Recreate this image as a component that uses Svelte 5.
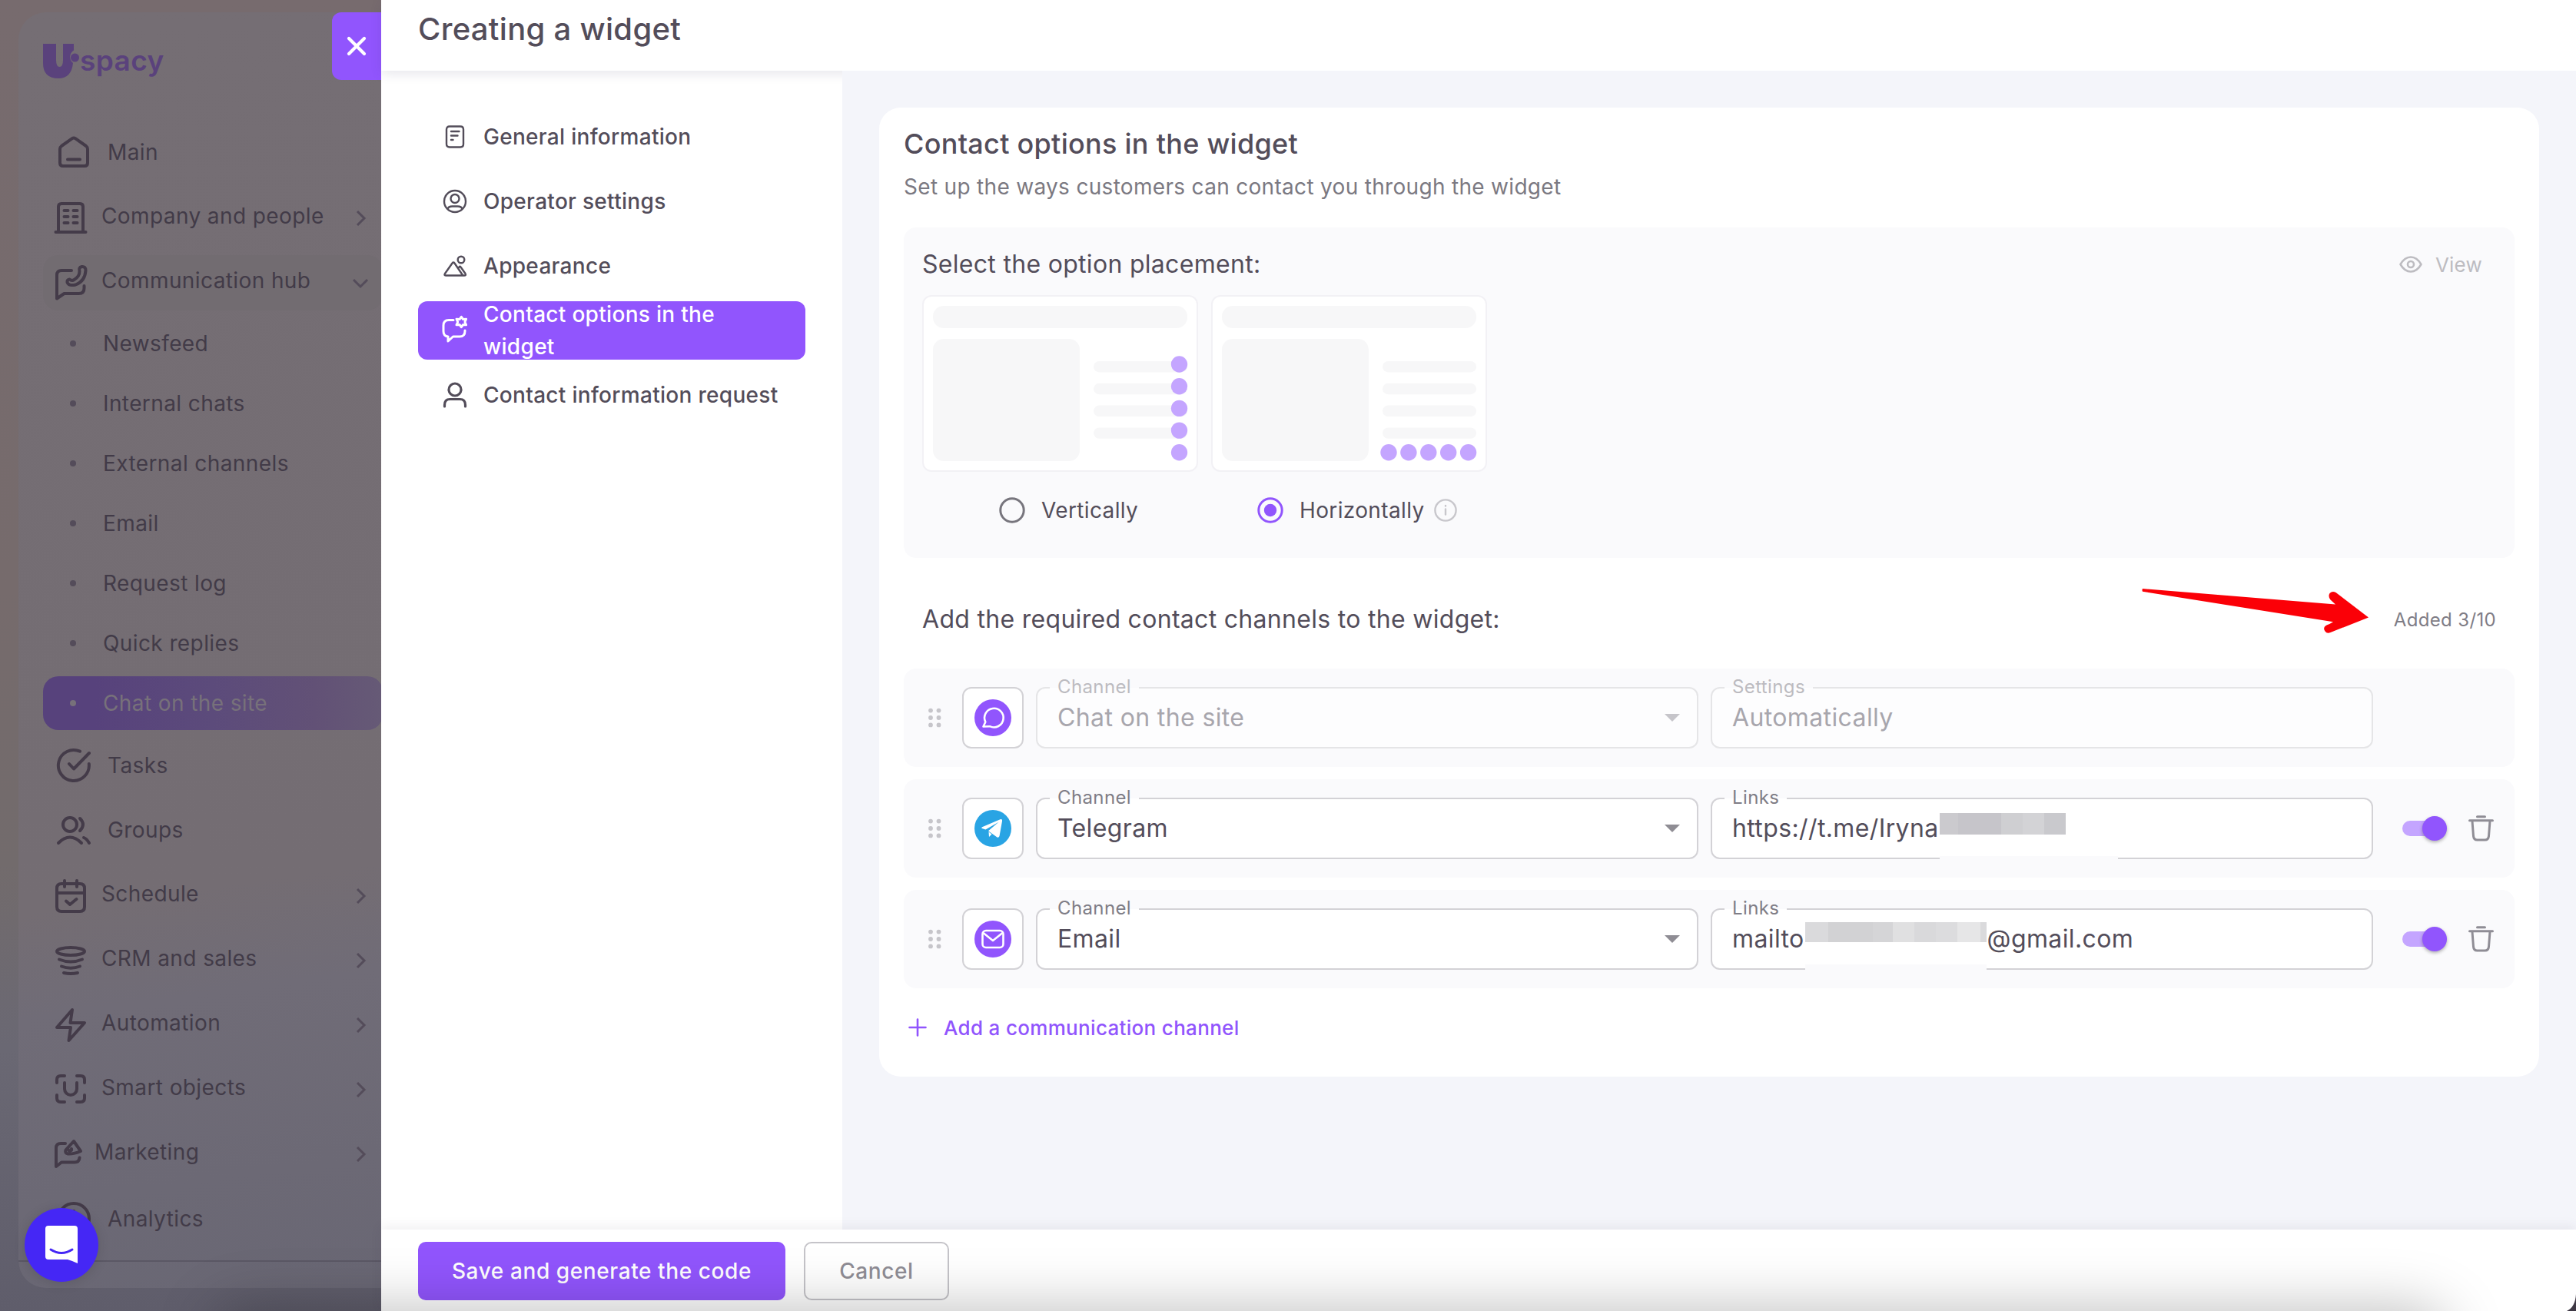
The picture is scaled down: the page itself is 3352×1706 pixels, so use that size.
<script>
  const icons = {
    home: 'M22 6.2q2-1.4 4 0L40 16q2 1.5 2 4V38q0 4-4 4H10q-4 0-4-4V20q0-2.500 2-4ZM16 33.500H32',
    building: 'M8 42V9q0-4 4-4h24q4 0 4 4v33M4.500 42h39M15.500 14h5M27.500 14h5M15.500 22h5M27.500 22h5M15.500 30h5M27.500 30h5',
    hub: 'M25 8H12q-6 0-6 6V44.500l9.500-6.500h19q7 0 7-7V28M35.500 9q-1.500-5 3-6q5-.5 5 5q-1 14-13 18.500q-9 2-11-3q-.5-3.500 3-4q3 2.500 6 .5q7-4 7-11z',
    tasks: 'M32 5.700A20 20 0 1 0 43.800 22M18 22l6 6.500L44 8',
    groups: 'M28 17a9 9 0 1 0-18 0a9 9 0 1 0 18 0M4 41q15-15 30 0M32 9q8 8 0 16M37 34q4 1.500 7 7',
    calendar: 'M12 8h24q6 0 6 6v24q0 6-6 6H12q-6 0-6-6V14q0-6 6-6zM6 20h36M16 4v8M32 4v8M18 30.500l5 4.500L31.500 28',
    funnel: 'M6 12a18 5 0 1 0 36 0a18 5 0 1 0-36 0M9 22.500q15 6 30 0M12 31.500q12 4.500 24 0M15 40q9 2 18 0',
    bolt: 'M26 4 6 27h18l-2.500 17L42 21H23.500z',
    smart: 'M6 15v-4q0-5 5-5h5M32 6h5q5 0 5 5v4M42 31v4q0 5-5 5h-5M16 40h-5q-5 0-5-5v-4M16 15v8a8 8 0 0 0 16 0v-8',
    marketing: 'M21 10h-6q-6 0-6 6V40l7-5.500h17q6 0 6.500-6M32 7l9 13q-9 4-17 3.500q-4-1.500-2.500-5zM29 17a2 2 0 1 1-4 1',
    analytics: 'M44 24a20 20 0 1 0-40 0a20 20 0 1 0 40 0M24 14v10l8 6',
    doc: 'M13 6.500h14q4 0 4 4v19q0 4-4 4H13q-4 0-4-4v-19q0-4 4-4zM15 13h10.500M15 18.500h8.500M15 24h2.500',
    operator: 'M34 20a14 14 0 1 0-28 0a14 14 0 1 0 28 0M25.500 16.500a5.500 5.500 0 1 0-11 0a5.500 5.500 0 1 0 11 0M10.500 30q1-3.500 6-3.500h7q5 0 6 3.500',
    mountain: 'M32.300 12a4.300 4.300 0 1 0-8.600 0a4.300 4.300 0 1 0 8.600 0M16.500 16.500 7 30q-1.500 2.500 1 2.500h24q3 0 1.500-2.500l-6-8.500q-1-1.500-2 0l-1 1.500M30 32 19.500 16.500q-1.500-2-3 0',
    chatgear: 'M18 6.500H12q-7 0-7 7V21q0 6.500 6 7v6l6.500-6H26q7 0 7-7v-1M28.300 2.300l2.300 3.200 4-.3-1.700 3.800 1.700 3.800-4-.3-2.300 3.200-2.300-3.200-4 .3 1.700-3.800-1.700-3.800 4 .3z',
    person: 'M28 13a8 8 0 1 0-16 0a8 8 0 1 0 16 0M6.500 35v-2q0-7.500 7-7.500h13q7 0 7 7.500v2'
  };

  const menu = [
    { label: 'Main', icon: 'home', kind: 'plain' },
    { label: 'Company and people', icon: 'building', kind: 'group' },
    {
      label: 'Communication hub', icon: 'hub', kind: 'group', open: true,
      children: ['Newsfeed', 'Internal chats', 'External channels', 'Email', 'Request log', 'Quick replies', 'Chat on the site']
    },
    { label: 'Tasks', icon: 'tasks', kind: 'plain' },
    { label: 'Groups', icon: 'groups', kind: 'plain' },
    { label: 'Schedule', icon: 'calendar', kind: 'group' },
    { label: 'CRM and sales', icon: 'funnel', kind: 'group' },
    { label: 'Automation', icon: 'bolt', kind: 'group' },
    { label: 'Smart objects', icon: 'smart', kind: 'group' },
    { label: 'Marketing', icon: 'marketing', kind: 'group tight' },
    { label: 'Analytics', icon: 'analytics', kind: 'plain' }
  ];
  const activeChild = 'Chat on the site';

  const steps = [
    { label: 'General information', icon: 'doc' },
    { label: 'Operator settings', icon: 'operator' },
    { label: 'Appearance', icon: 'mountain' },
    { label: 'Contact options in the widget', icon: 'chatgear', active: true },
    { label: 'Contact information request', icon: 'person' }
  ];

  const channels = [
    { type: 'chat', name: 'Chat on the site', label: 'Settings', before: 'Automatically', disabled: true },
    { type: 'telegram', name: 'Telegram', label: 'Links', before: 'https://t.me/Iryna', mask: 'user', after: '' },
    { type: 'email', name: 'Email', label: 'Links', before: 'mailto', mask: 'mail', after: '@gmail.com' }
  ];

  const five = [0, 1, 2, 3, 4];
  const four = [0, 1, 2, 3];
</script>

<div class="app">
  <aside>
    <div class="panel">
      <div class="logo">
        <svg width="50" height="48" viewBox="0 0 50 48">
          <path d="M0 2h17v21q0 9 4.500 9t4.500-9V2h14v8.500a10 10 0 0 0-1 16.500q-2 20-19 20Q0 47 0 27z" />
          <circle cx="41.500" cy="20" r="5.500" />
        </svg>
        <span>spacy</span>
      </div>
      <nav class="menu">
        {#each menu as m}
          <div class="item {m.kind}" class:open={m.open}>
            <svg class="ico" width="48" height="48" viewBox="0 0 48 48"><path d={icons[m.icon]} /></svg>
            <span>{m.label}</span>
            {#if m.kind !== 'plain'}
              <svg class="chev" width="24" height="24" viewBox="0 0 24 24"><path d={m.open ? 'M3 8l9 9 9-9' : 'M8 3l9 9-9 9'} /></svg>
            {/if}
          </div>
          {#if m.children}
            <div class="sub">
              {#each m.children as c}
                <div class="child" class:active={c === activeChild}><i></i><span>{c}</span></div>
              {/each}
            </div>
          {/if}
        {/each}
      </nav>
      <div class="rule"></div>
    </div>
    <button class="close" aria-label="Close">
      <svg width="26" height="26" viewBox="0 0 26 26"><path d="M3 3l20 20M23 3L3 23" /></svg>
    </button>
    <button class="messenger" aria-label="Open messenger">
      <svg width="44" height="52" viewBox="0 0 44 52">
        <path class="face" d="M5 1h34q4 0 4 4v45q-6-3-13-5H5q-4 0-4-4V5q0-4 4-4z" />
        <path class="smile" d="M8 32q14 9 28 0" />
      </svg>
    </button>
  </aside>

  <section class="drawer">
    <header><h1>Creating a widget</h1></header>
    <div class="body">
      <nav class="steps">
        {#each steps as s}
          <div class="step" class:active={s.active}>
            <svg class={s.icon} width="40" height="40" viewBox="0 0 40 40"><path d={icons[s.icon]} /></svg>
            <span>{s.label}</span>
          </div>
        {/each}
      </nav>

      <main>
        <div class="card">
          <h2>Contact options in the widget</h2>
          <p class="hint">Set up the ways customers can contact you through the widget</p>

          <div class="placement">
            <div class="placement-head">
              <h3>Select the option placement:</h3>
              <div class="view">
                <svg width="32" height="24" viewBox="0 0 32 24"><path d="M2.500 12Q8 2.500 16 2.500T29.500 12Q24 21.500 16 21.500T2.500 12z" /><circle cx="16" cy="12" r="4" /></svg>
                <span>View</span>
              </div>
            </div>
            <div class="thumbs">
              {#each ['vertical', 'horizontal'] as dir}
                <div class="option">
                  <svg class="thumb" width="359" height="230" viewBox="0 0 359 230">
                    <rect class="frame" x="1" y="1" width="357" height="228" rx="11" />
                    <rect x="14" y="14" width="331" height="29" rx="14" />
                    <rect x="14" y="57" width="191" height="159" rx="14" />
                    {#each four as n}
                      <rect x="223" y={86 + n * 28.800} width="122" height="14.400" rx="7.200" />
                    {/each}
                    {#each five as n}
                      <circle
                        cx={dir === 'vertical' ? 334.500 : 231 + n * 25.900}
                        cy={dir === 'vertical' ? 90 + n * 28.700 : 204.800}
                        r="10.700" />
                    {/each}
                  </svg>
                  <div class="radio {dir}">
                    <svg width="34" height="34" viewBox="0 0 34 34">
                      <circle class="ring" cx="17" cy="17" r="15.200" />
                      {#if dir === 'horizontal'}<circle class="dot" cx="17" cy="17" r="8.200" />{/if}
                    </svg>
                    <span>{dir === 'vertical' ? 'Vertically' : 'Horizontally'}</span>
                    {#if dir === 'horizontal'}
                      <svg class="info" width="30" height="30" viewBox="0 0 30 30"><circle cx="15" cy="15" r="13.600" /><path d="M15 13.500v7M15 9v.5" /></svg>
                    {/if}
                  </div>
                </div>
              {/each}
            </div>
          </div>

          <div class="channels-head">
            <h3>Add the required contact channels to the widget:</h3>
            <span>Added 3/10</span>
            <svg class="arrow" width="300" height="64" viewBox="0 0 300 64">
              <path d="M5 3Q4 5 5 6.700L253 46.300Q249 49 244.500 50.500Q239 53.500 242.500 58.500Q245 62 249.500 60L299 40.500L256.500 8Q252 5.500 248.500 9Q246 13 249.500 17.500L256 23.500Z" />
            </svg>
          </div>

          <div class="rows">
            {#each channels as c}
              <div class="row" class:disabled={c.disabled}>
                <svg class="drag" width="18" height="26" viewBox="0 0 18 26">
                  {#each [3.600, 13, 22.400] as y}
                    <circle cx="4" cy={y} r="2.900" /><circle cx="14.500" cy={y} r="2.900" />
                  {/each}
                </svg>
                <div class="badge">
                  <svg width="48" height="48" viewBox="0 0 48 48">
                    <circle class={c.type} cx="24" cy="24" r="24" />
                    {#if c.type === 'chat'}
                      <path class="line" d="M11.500 35.500l2.800-6A12.300 12.300 0 1 1 20 35.200z" />
                    {:else if c.type === 'telegram'}
                      <path class="fill" d="M10 22.300 33.500 12.200q3-1 2.500 2.500L32.500 34q-.9 2.700-3.400 1.200L18 27.200l13.500-11.500L14.500 25.500 9.800 24q-1.500-.8.2-1.700zM18.500 28.500l4 3-3.500 3.500z" />
                    {:else}
                      <rect class="line" x="10.500" y="13" width="27" height="22" rx="4.500" />
                      <path class="line" d="M11.500 16 24 26l12.500-10" />
                    {/if}
                  </svg>
                </div>
                <div class="field">
                  <label>Channel</label>
                  <span>{c.name}</span>
                  <svg class="caret" width="20" height="10" viewBox="0 0 20 10"><path d="M0 0h20L10 10z" /></svg>
                </div>
                <div class="field">
                  <label>{c.label}</label>
                  <span>{c.before}</span>
                  {#if c.mask}
                    <div class="mask {c.mask}"></div>
                    <div class="wipe {c.mask}"></div>
                    <span>{c.after}</span>
                  {/if}
                </div>
                {#if !c.disabled}
                  <div class="switch"><i></i></div>
                  <svg class="trash" width="40" height="40" viewBox="0 0 40 40"><path d="M5.500 9.800h30M15.500 4.800h10M9 10.500l1.500 19.500q.5 5 5 5h10q4.500 0 5-5L32 10.500" /></svg>
                {/if}
              </div>
            {/each}
          </div>

          <div class="add">
            <svg width="24" height="24" viewBox="0 0 24 24"><path d="M12 1.500v21M1.500 12h21" /></svg>
            <span>Add a communication channel</span>
          </div>
        </div>
      </main>
    </div>
    <footer>
      <button class="primary">Save and generate the code</button>
      <button class="ghost">Cancel</button>
    </footer>
  </section>

  <div class="glow"></div>
  <svg class="corner" width="12" height="22" viewBox="0 0 12 22"><path d="M12 0v22H0Q11 17 12 0z" /></svg>
</div>

<style>
  :global(body) { background: #fff; }
  * { box-sizing: border-box; }
  .app {
    position: relative; display: flex; width: 3352px; height: 1706px; overflow: hidden;
    font-family: Inter, "Liberation Sans", sans-serif; color: #534d5a; letter-spacing: .36px;
  }
  h1, h2, h3, p { margin: 0; }
  button { font: inherit; border: 0; padding: 0; margin: 0; }
  svg { display: block; flex: none; fill: none; stroke-linecap: round; stroke-linejoin: round; }

  /* dimmed application sidebar */
  aside {
    position: relative; width: 496px; flex: none; padding: 16px 0 30px 24px; overflow: hidden;
    background: linear-gradient(180deg, #776b6e 0, #766b6c 45%, #726b6c 66%, #6a6873 80%, #5f5d6b 100%);
    color: #423b48;
  }
  .panel {
    display: flex; flex-direction: column; height: 1660px; border-radius: 36px 0 0 36px;
    background: linear-gradient(172deg, #756e74 0, #746d73 68%, #706c77 76%, #6c6975 90%, #696774 100%);
  }
  .logo { display: flex; align-items: center; height: 64px; margin: 31px 0 45px 32px; }
  .logo svg { fill: #5a427c; }
  .logo span { font-size: 37px; font-weight: 600; color: #5a427c; line-height: 50px; letter-spacing: .4px; margin-left: -2px; padding-bottom: 1px; }
  .menu { font-size: 28px; letter-spacing: .4px; }
  .item { display: flex; align-items: center; height: 84px; padding-left: 48px; gap: 20px; }
  .item.group { padding-left: 44px; gap: 16px; }
  .item.group span { padding-bottom: 6px; }
  .item.tight { padding-left: 40px; gap: 11px; }
  .item:nth-child(2), .item:nth-child(7) { margin-top: 2px; }
  .item.open { height: 72px; margin: 6px -2px 0 32px; padding-left: 12px; border-radius: 20px; background: #726c71; }
  .ico { stroke: #443b49; stroke-width: 4; }
  .chev { stroke: #544c5a; stroke-width: 3; margin-left: auto; margin-right: 15px; stroke-linecap: butt; stroke-linejoin: miter; }
  .item.open .chev { margin-right: 17px; }
  .sub { padding: 8px 0 0 32px; margin-bottom: -4px; }
  .child { display: flex; align-items: center; height: 70px; margin: 0 -2px 8px 0; padding-left: 35px; gap: 35px; border-radius: 20px; }
  .child i { width: 8px; height: 8px; border-radius: 50%; background: #544c5a; }
  .child.active { color: #77717a; background: linear-gradient(90deg, #57427c 0, #57427c 15%, #5c4b7b 50%, #625176 80%, #665a76 100%); }
  .child.active i { background: #77717a; }
  .rule { height: 2px; margin-top: 12px; background: #5b5865; }
  .close {
    position: absolute; top: 16px; right: 0; width: 64px; height: 88px; border-radius: 12px 0 0 12px;
    background: #9155fd; display: flex; align-items: center; justify-content: center;
  }
  .close svg { stroke: #fff; stroke-width: 4.2; }
  .messenger {
    position: absolute; left: 32px; top: 1572px; width: 96px; height: 96px; border-radius: 50%;
    background: #4527f5; display: flex; align-items: center; justify-content: center;
    box-shadow: 0 2px 16px rgba(0, 0, 0, .12);
  }
  .face { fill: #fff; }
  .smile { stroke: #4527f5; stroke-width: 3; }

  /* drawer */
  .drawer { flex: 1; display: flex; flex-direction: column; background: #fff; min-width: 0; }
  header { height: 92px; flex: none; padding: 6px 48px; box-shadow: 0 4px 14px rgba(60, 50, 100, .12); position: relative; z-index: 1; background: #fff; }
  h1 { font-size: 40px; font-weight: 500; line-height: 64px; letter-spacing: .3px; }
  .body { flex: 1; display: flex; min-height: 0; }
  .steps { width: 600px; flex: none; padding: 48px 48px 0; display: flex; flex-direction: column; gap: 8px; }
  .step { display: flex; align-items: center; height: 76px; padding: 0 24px 0 28px; gap: 17px; border-radius: 12px; font-size: 28px; font-weight: 500; line-height: 42px; letter-spacing: .3px; }
  .step svg { stroke: #534d5a; stroke-width: 2.4; }
  .step svg.person { stroke-width: 3.2; }
  .step.active { background: #9155fd; color: #fff; }
  .step.active svg { stroke: #fff; stroke-width: 3; }

  main { flex: 1; padding: 48px; background: #f4f5fa; position: relative; z-index: 2; }
  .card { height: 1261px; padding: 19px 32px 0; border-radius: 28px; background: #fff; }
  h2 { font-size: 36px; font-weight: 500; line-height: 56px; letter-spacing: .28px; }
  .hint { font-size: 28px; line-height: 40px; color: #7b7982; margin: 8px 0 33px; letter-spacing: .31px; }
  h3 { font-size: 32px; font-weight: 400; line-height: 48px; letter-spacing: .3px; }

  .placement { height: 430px; border-radius: 16px; background: #fafafc; padding: 24px; }
  .placement-head { display: flex; justify-content: space-between; align-items: center; height: 48px; }
  .view { display: flex; align-items: center; gap: 16px; font-size: 26px; color: #bdbcc1; margin-right: 18px; letter-spacing: .2px; }
  .view svg { stroke: #bdbcc1; stroke-width: 2.6; }
  .thumbs { display: flex; gap: 17px; padding-top: 16px; }
  .thumb rect { fill: #f7f7f8; }
  .thumb .frame { fill: #fff; stroke: #f2f1f5; stroke-width: 2; }
  .thumb circle { fill: #c4a5ff; }
  .radio { display: flex; align-items: center; height: 40px; margin-top: 30px; font-size: 28px; padding-left: 100px; gap: 21px; }
  .radio.horizontal { padding-left: 60px; }
  .radio .ring { stroke: #77757d; stroke-width: 3; }
  .horizontal .ring { stroke: #9155fd; }
  .horizontal .dot { fill: #9155fd; }
  .radio .info { margin-left: -9px; stroke: #c8c7cc; stroke-width: 2.4; }

  .channels-head { position: relative; display: flex; justify-content: space-between; align-items: center; height: 144px; padding: 16px 24px 0; }
  .channels-head span { font-size: 24px; color: #7f7d86; letter-spacing: .35px; }
  .arrow { position: absolute; left: 1607px; top: 37px; fill: #fb0007; }

  .rows { display: flex; flex-direction: column; gap: 16px; }
  .row { display: flex; align-items: center; height: 128px; padding-left: 31px; border-radius: 16px; background: #fafafc; }
  .drag { fill: #c6c5ca; margin-right: 27px; }
  .badge { width: 80px; height: 80px; border: 2px solid #d3d2d6; border-radius: 12px; background: #fff; display: flex; align-items: center; justify-content: center; }
  .badge .chat, .badge .email { fill: #9155fd; }
  .badge .telegram { fill: #29a4e4; }
  .badge .line { stroke: #fff; stroke-width: 2.6; }
  .badge .fill { fill: #fff; }
  .field {
    position: relative; display: flex; align-items: center; width: 862px; height: 80px; margin-left: 16px; padding: 0 22px 0 26px;
    border: 2px solid #d3d2d6; border-radius: 12px; background: #fff; font-size: 32px; letter-spacing: .38px;
  }
  .field span { padding-bottom: 2px; }
  .field label {
    position: absolute; left: 16px; top: -18px; padding: 0 10px; line-height: 32px; font-size: 24px; color: #7f7d86;
    background: linear-gradient(#fafafc 53%, #fff 53%);
  }
  .disabled .field { color: #a8a6ad; border-color: #e5e5e7; background: #fdfdfe; }
  .disabled .field label { color: #bcbbc0; background: linear-gradient(#fafafc 53%, #fdfdfe 53%); }
  .caret { margin-left: auto; fill: #8f8d94; }
  .disabled .caret { fill: #c6c5ca; }
  .mask.user {
    width: 164px; height: 28px; margin: 0 0 12px 1px;
    background: linear-gradient(90deg, #cbcace 0 24px, #c6c5ca 24px 80px, #cfcfd2 80px 108px, #d3d3d6 108px 136px, #c9c9cd 136px);
  }
  .mask.mail {
    width: 236px; height: 26px; margin: 0 1px 18px 1px;
    background: linear-gradient(90deg, #dadadc 0 30px, #d2d2d4 30px 88px, #d5d5d7 88px 114px, #e0e0e1 114px 142px, #d9d9db 142px 170px, #dcdcde 170px 198px, #e6e6e7 198px 228px, #dadadc 228px);
  }
  .wipe { position: absolute; bottom: -3px; height: 5px; background: #fafafc; }
  .wipe.user { left: 296px; width: 232px; }
  .wipe.mail { left: 121px; width: 236px; height: 8px; }
  .switch { position: relative; width: 58px; height: 32px; margin-left: 38px; }
  .switch::before { content: ""; position: absolute; left: 0; top: 6px; width: 50px; height: 20px; border-radius: 10px; background: #c4a5ff; }
  .switch i { position: absolute; right: 0; top: 0; width: 32px; height: 32px; border-radius: 50%; background: #9155fd; box-shadow: 0 2px 4px rgba(0, 0, 0, .3); }
  .trash { margin-left: 24px; stroke: #8f8d95; stroke-width: 3; }
  .add { display: flex; align-items: center; gap: 22px; height: 40px; margin: 31px 0 0 6px; font-size: 26px; font-weight: 500; color: #9155fd; letter-spacing: .32px; }
  .add svg { stroke: #9155fd; stroke-width: 2.6; }

  footer { height: 106px; flex: none; display: flex; gap: 24px; padding: 16px 48px 0; background: #fff; position: relative; z-index: 3; box-shadow: 0 -4px 14px rgba(60, 50, 80, .08); }
  footer button { height: 76px; border-radius: 10px; font-size: 28px; font-weight: 500; letter-spacing: .6px; padding-bottom: 1px; }
  .primary { width: 478px; background: #9155fd; color: #fff; }
  .ghost { width: 189px; background: transparent; border: 2px solid #c5c4c9; color: #8f8d95; }

  /* shadow cast from below the window */
  .glow { position: absolute; z-index: 4; left: 290px; right: 180px; top: 1716px; height: 60px; border-radius: 30px; box-shadow: 0 0 74px 14px rgba(0, 0, 0, .25); }
  .corner { position: absolute; z-index: 5; right: 0; bottom: 0; fill: #3f3945; }
</style>
